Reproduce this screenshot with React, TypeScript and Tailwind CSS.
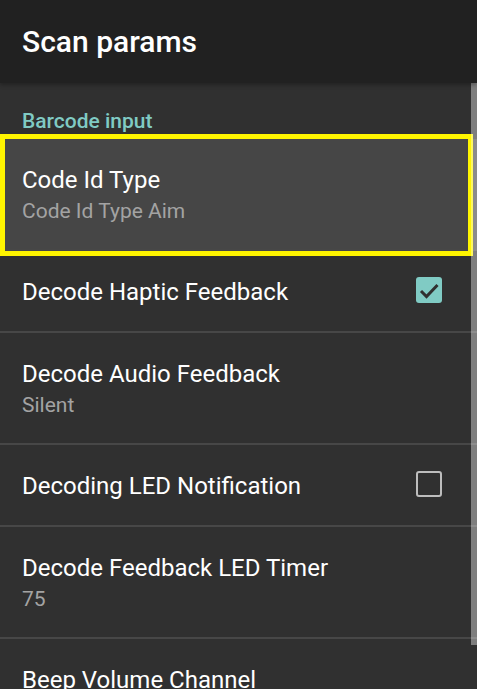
import React from "react";

function CheckOn() {
  return (
    <div className="w-[26px] h-[26px] mb-[4px] rounded-[3px] bg-[#80cbc4] flex items-center justify-center">
      <svg width="26" height="26" viewBox="0 0 26 26">
        <path d="M5 14 L10.5 19.5 L21.5 8" fill="none" stroke="#303030" strokeWidth="3" />
      </svg>
    </div>
  );
}

function CheckOff() {
  return <div className="w-[26px] h-[26px] mb-[4px] rounded-[3px] border-[2.5px] border-[#bdbdbd]" />;
}

function Row({
  title,
  sub,
  check,
  selected,
}: {
  title: string;
  sub?: string;
  check?: "on" | "off";
  selected?: boolean;
}) {
  return (
    <div className="relative">
      <div
        className={`flex items-center pl-[22px] pr-[35px] ${sub ? "h-[110px] pt-[2px]" : "h-[80px] pt-[1px]"} ${
          selected ? "bg-[#464646]" : ""
        }`}
      >
        <div className="flex-1 flex flex-col gap-[5px]">
          <div className="text-[24px] leading-[28px] text-white">{title}</div>
          {sub && <div className="text-[21px] leading-[25px] text-[#a3a3a3]">{sub}</div>}
        </div>
        {check === "on" && <CheckOn />}
        {check === "off" && <CheckOff />}
      </div>
      <div className="h-[2px] bg-[#474747]" />
      {selected && (
        <div className="absolute top-[-5px] bottom-[-5px] left-0 w-[473px] border-[5px] border-[#fff500] pointer-events-none" />
      )}
    </div>
  );
}

export default function App() {
  return (
    <div className="w-[477px] h-[689px] bg-[#303030] overflow-hidden relative font-['Roboto',sans-serif]">
      <header className="relative z-10 h-[83px] bg-[#212121] flex items-center px-[22px] shadow-[0_2px_4px_rgba(0,0,0,0.3)]">
        <h1 className="text-[30px] leading-[35px] font-medium text-white">Scan params</h1>
      </header>
      <div className="relative">
        <div className="h-[56px] pl-[22px] pt-[26px]">
          <div className="text-[21px] leading-[25px] font-medium text-[#80cbc4]">Barcode input</div>
        </div>
        <Row title="Code Id Type" sub="Code Id Type Aim" selected />
        <Row title="Decode Haptic Feedback" check="on" />
        <Row title="Decode Audio Feedback" sub="Silent" />
        <Row title="Decoding LED Notification" check="off" />
        <Row title="Decode Feedback LED Timer" sub="75" />
        <Row title="Beep Volume Channel" sub="Music" />
        <div className="absolute right-0 top-0 w-[6px] h-[562px] bg-white/[0.38]" />
      </div>
    </div>
  );
}
